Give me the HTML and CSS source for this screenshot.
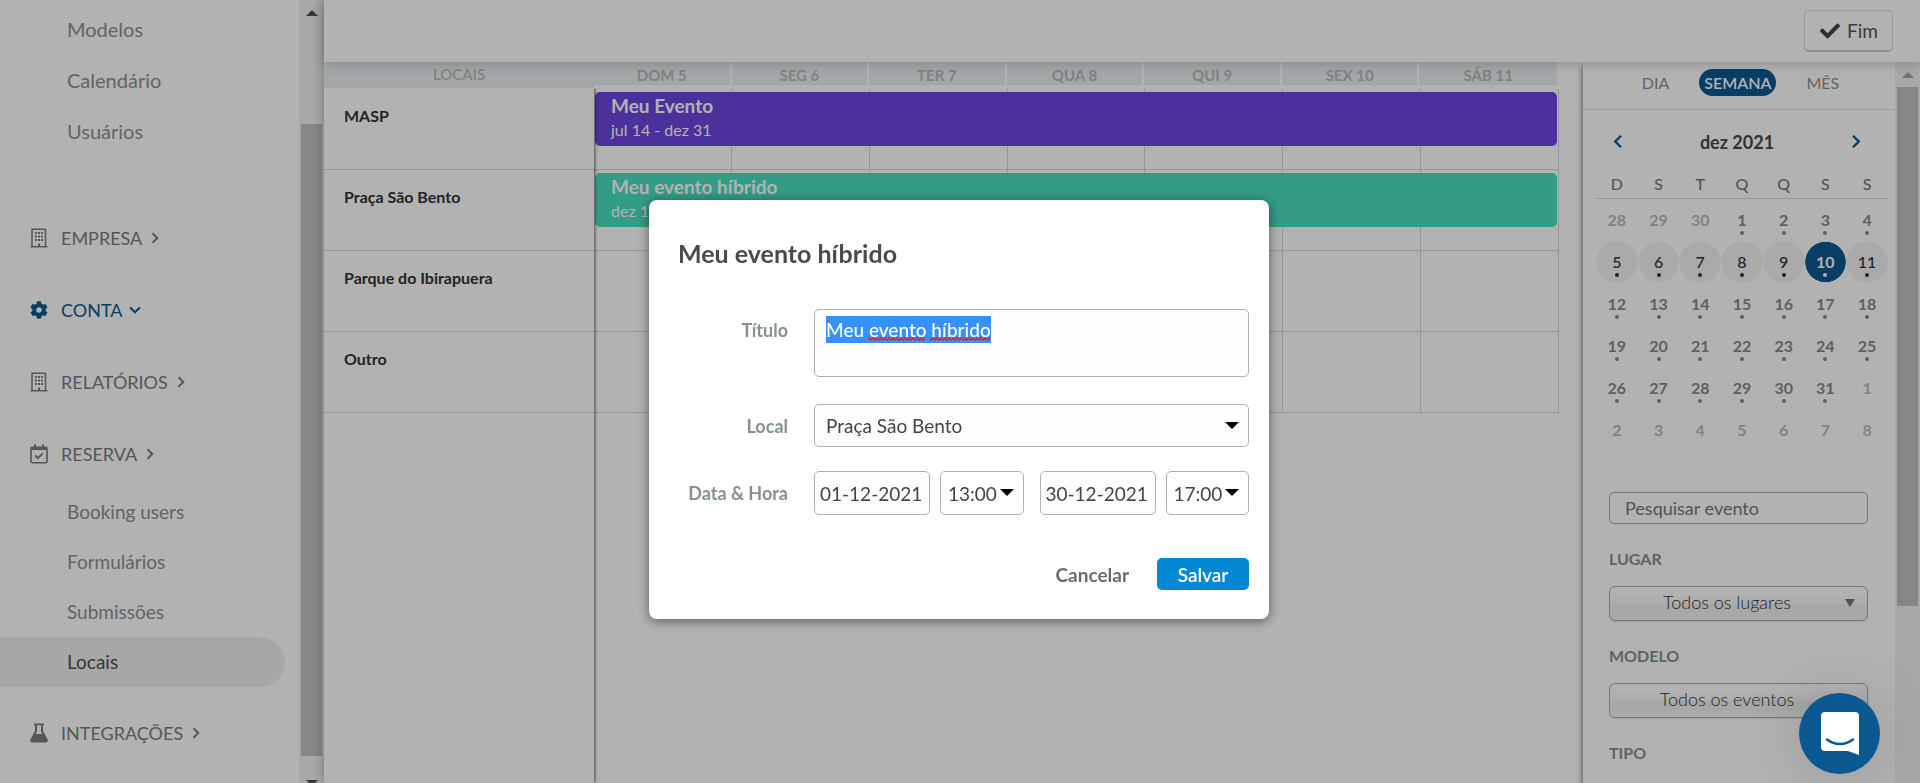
FILE: index.html
```html
<!DOCTYPE html>
<html lang="pt-BR">
<head>
  <meta charset="UTF-8">
  <meta name="viewport" content="width=device-width, initial-scale=1.0">
  <title>Locais</title>
  <link rel="stylesheet" href="styles.css">
</head>
<body>
  <svg width="0" height="0" class="sprite" aria-hidden="true">
    <symbol id="i-building" viewBox="0 0 18 20">
      <path d="M2 18.500V1.200h13.500v17.300" fill="none" stroke="currentColor" stroke-width="1.500"/>
      <path d="M.5 18h17v1.500H.5zM8 15.500h2V19H8zM5 4h2v2H5zM8 4h2v2H8zM11 4h2v2h-2zM5 7.500h2v2H5zM8 7.500h2v2H8zM11 7.500h2v2h-2zM5 11h2v2H5zM8 11h2v2H8zM11 11h2v2h-2z" fill="currentColor"/>
    </symbol>
    <symbol id="i-chevron" viewBox="0 0 10 12">
      <path d="M2.5 1.2 7.3 6l-4.8 4.8" fill="none" stroke="currentColor" stroke-width="2"/>
    </symbol>
  </svg>

  <div class="app">
    <aside class="sidebar">
      <nav class="menu">
        <ul class="submenu">
          <li><a href="#">Modelos</a></li>
          <li><a href="#">Calendário</a></li>
          <li><a href="#">Usuários</a></li>
        </ul>
        <a href="#" class="group">
          <svg class="icon"><use href="#i-building"/></svg>EMPRESA
          <svg class="chevron"><use href="#i-chevron"/></svg>
        </a>
        <a href="#" class="group open">
          <svg class="icon" viewBox="0 0 512 512"><path fill="currentColor" d="M487.4 315.7l-42.6-24.6c4.3-23.2 4.3-47 0-70.2l42.6-24.6c4.9-2.8 7.1-8.6 5.5-14-11.1-35.6-30-67.8-54.7-94.6-3.8-4.1-10-5.1-14.8-2.3L380.8 110c-17.9-15.4-38.5-27.3-60.8-35.1V25.8c0-5.6-3.9-10.5-9.4-11.7-36.7-8.2-74.3-7.8-109.2 0-5.5 1.2-9.4 6.1-9.4 11.7V75c-22.2 7.9-42.8 19.8-60.8 35.1L88.7 85.5c-4.9-2.8-11-1.9-14.8 2.3-24.7 26.7-43.6 58.9-54.7 94.6-1.7 5.4.6 11.2 5.5 14L67.3 221c-4.3 23.2-4.3 47 0 70.2l-42.6 24.6c-4.9 2.8-7.1 8.6-5.5 14 11.1 35.6 30 67.8 54.7 94.6 3.8 4.1 10 5.1 14.8 2.3l42.6-24.6c17.9 15.4 38.5 27.3 60.8 35.1v49.2c0 5.6 3.9 10.5 9.4 11.7 36.7 8.2 74.3 7.8 109.2 0 5.5-1.2 9.4-6.1 9.4-11.7v-49.2c22.2-7.9 42.8-19.8 60.8-35.1l42.6 24.6c4.9 2.8 11 1.9 14.8-2.3 24.7-26.7 43.6-58.9 54.7-94.6 1.5-5.5-.7-11.3-5.6-14.1zM256 336c-44.1 0-80-35.9-80-80s35.9-80 80-80 80 35.9 80 80-35.9 80-80 80z"/></svg>CONTA
          <svg class="chevron"><use href="#i-chevron"/></svg>
        </a>
        <a href="#" class="group">
          <svg class="icon"><use href="#i-building"/></svg>RELATÓRIOS
          <svg class="chevron"><use href="#i-chevron"/></svg>
        </a>
        <a href="#" class="group">
          <svg class="icon" viewBox="0 0 18 20"><rect x="1" y="3.2" width="16" height="15.6" rx="1.2" fill="none" stroke="currentColor" stroke-width="1.6"/><path d="M1 3h16v3H1zM4 .5h2V4H4zM12 .5h2V4h-2z" fill="currentColor"/><path d="m5.2 11.5 2.7 2.7 4.9-4.9" fill="none" stroke="currentColor" stroke-width="1.8"/></svg>RESERVA
          <svg class="chevron"><use href="#i-chevron"/></svg>
        </a>
        <ul class="submenu compact">
          <li><a href="#">Booking users</a></li>
          <li><a href="#">Formulários</a></li>
          <li><a href="#">Submissões</a></li>
          <li><a href="#" class="active">Locais</a></li>
        </ul>
        <a href="#" class="group">
          <svg class="icon" viewBox="0 0 18 20"><path fill="currentColor" fill-rule="evenodd" d="M4 .5h10v1.700h-1V8l4.500 8.200c.9 1.700.1 3.300-1.600 3.300H2.100C.4 19.500-.4 17.900.5 16.200L5 8V2.200H4zM7 2.200V8.500L5.600 11h6.800L11 8.500V2.200z"/></svg>INTEGRAÇÕES
          <svg class="chevron"><use href="#i-chevron"/></svg>
        </a>
      </nav>
      <div class="scrollbar sidebar-scroll">
        <span class="arrow-up"></span>
        <span class="thumb"></span>
        <span class="arrow-down"></span>
      </div>
    </aside>

    <main class="main">
      <header class="topbar">
        <button type="button" class="done">
          <svg viewBox="0 0 512 512" width="20" height="20"><path fill="currentColor" d="M173.900 439.400 7.500 273c-10-10-10-26.200 0-36.200l36.200-36.200c10-10 26.200-10 36.200 0L192 312.700 432.100 72.600c10-10 26.200-10 36.200 0l36.200 36.200c10 10 10 26.200 0 36.200L210.100 439.400c-10 10-26.200 10-36.200 0z"/></svg>Fim
        </button>
      </header>

      <div class="content">
        <section class="places">
          <div class="places-head">LOCAIS</div>
          <div class="places-list">
            <div class="place">MASP</div>
            <div class="place">Praça São Bento</div>
            <div class="place">Parque do Ibirapuera</div>
            <div class="place">Outro</div>
          </div>
        </section>

        <section class="week">
          <div class="week-head">
            <span>DOM 5</span><span>SEG 6</span><span>TER 7</span><span>QUA 8</span><span>QUI 9</span><span>SEX 10</span><span>SÁB 11</span>
          </div>
          <div class="week-row">
            <i></i><i></i><i></i><i></i><i></i><i></i><i></i>
            <div class="event purple"><strong>Meu Evento</strong><span>jul 14 - dez 31</span></div>
          </div>
          <div class="week-row">
            <i></i><i></i><i></i><i></i><i></i><i></i><i></i>
            <div class="event green"><strong>Meu evento híbrido</strong><span>dez 1 - dez 30</span></div>
          </div>
          <div class="week-row"><i></i><i></i><i></i><i></i><i></i><i></i><i></i></div>
          <div class="week-row"><i></i><i></i><i></i><i></i><i></i><i></i><i></i></div>
        </section>

        <aside class="panel">
          <div class="views">
            <button type="button">DIA</button>
            <button type="button" class="current">SEMANA</button>
            <button type="button">MÊS</button>
          </div>
          <div class="month">
            <button type="button" class="prev" aria-label="Mês anterior"><svg class="chevron"><use href="#i-chevron"/></svg></button>
            <h2>dez 2021</h2>
            <button type="button" aria-label="Próximo mês"><svg class="chevron"><use href="#i-chevron"/></svg></button>
          </div>
          <table class="calendar">
            <thead>
              <tr><th>D</th><th>S</th><th>T</th><th>Q</th><th>Q</th><th>S</th><th>S</th></tr>
            </thead>
            <tbody>
              <tr><td class="out">28</td><td class="out">29</td><td class="out">30</td><td>1</td><td>2</td><td>3</td><td>4</td></tr>
              <tr class="in-week"><td>5</td><td>6</td><td>7</td><td>8</td><td>9</td><td class="today">10</td><td>11</td></tr>
              <tr><td>12</td><td>13</td><td>14</td><td>15</td><td>16</td><td>17</td><td>18</td></tr>
              <tr><td>19</td><td>20</td><td>21</td><td>22</td><td>23</td><td>24</td><td>25</td></tr>
              <tr><td>26</td><td>27</td><td>28</td><td>29</td><td>30</td><td>31</td><td class="out">1</td></tr>
              <tr><td class="out">2</td><td class="out">3</td><td class="out">4</td><td class="out">5</td><td class="out">6</td><td class="out">7</td><td class="out">8</td></tr>
            </tbody>
          </table>
          <form class="filters">
            <input type="text" class="search" placeholder="Pesquisar evento" aria-label="Pesquisar evento">
            <label for="lugar">LUGAR</label>
            <div class="pick">
              <select id="lugar"><option>Todos os lugares</option></select>
            </div>
            <label for="modelo">MODELO</label>
            <div class="pick">
              <select id="modelo"><option>Todos os eventos</option></select>
            </div>
            <label for="tipo">TIPO</label>
            <div class="pick">
              <select id="tipo"><option>Todos os tipos</option></select>
            </div>
          </form>
        </aside>
        <div class="scrollbar panel-scroll">
          <span class="arrow-up"></span>
          <span class="thumb"></span>
        </div>
      </div>
    </main>
  </div>

  <div class="overlay">
    <form class="modal" role="dialog" aria-labelledby="modalTitle">
      <h1 id="modalTitle">Meu evento híbrido</h1>
      <div class="field field-title">
        <label for="titulo">Título</label>
        <div class="title-box">
          <textarea id="titulo" spellcheck="false">Meu evento híbrido</textarea>
          <!-- spelling marks under the last two words -->
          <svg class="spell" width="122" height="4" aria-hidden="true">
            <defs><pattern id="wave" width="4" height="4" patternUnits="userSpaceOnUse"><path d="M-1 3 1 1l2 2 2-2" fill="none" stroke="#e02020" stroke-width="1.400"/></pattern></defs>
            <rect width="57" height="4" fill="url(#wave)"/>
            <rect x="62" width="60" height="4" fill="url(#wave)"/>
          </svg>
        </div>
      </div>
      <div class="field">
        <label for="local">Local</label>
        <div class="select">
          <select id="local"><option>Praça São Bento</option></select>
        </div>
      </div>
      <div class="field field-dates">
        <label for="dataInicio">Data &amp; Hora</label>
        <div class="dates">
          <input type="text" id="dataInicio" value="01-12-2021">
          <div class="select time"><select aria-label="Hora de início"><option>13:00</option></select></div>
          <input type="text" class="end" value="30-12-2021" aria-label="Data de fim">
          <div class="select time"><select aria-label="Hora de fim"><option>17:00</option></select></div>
        </div>
      </div>
      <div class="actions">
        <button type="button" class="cancel">Cancelar</button>
        <button type="submit" class="save">Salvar</button>
      </div>
    </form>
  </div>

  <button type="button" class="chat" aria-label="Chat">
    <svg width="38" height="43" viewBox="0 0 38 43"><path fill="#fff" d="M4 0h30a4 4 0 0 1 4 4v39l-11-4H4a4 4 0 0 1-4-4V4a4 4 0 0 1 4-4z"/><path d="M6 27.500c8 6 18 6 26 0" fill="none" stroke="#0c5891" stroke-width="2.400" stroke-linecap="round"/></svg>
  </button>

  <script>
    const titulo = document.getElementById('titulo');
    titulo.focus();
    titulo.select();
  </script>
</body>
</html>
```
FILE: styles.css
```css
* {
  box-sizing: border-box;
}
body {
  margin: 0;
  height: 100vh;
  overflow: hidden;
  font-family: Lato, sans-serif;
  font-size: 18px;
  color: #333;
  background: #fff;
}
button, input, select, textarea {
  font-family: inherit;
  font-size: inherit;
  color: inherit;
  margin: 0;
}
button {
  background: none;
  border: none;
  padding: 0;
  cursor: pointer;
}
a {
  color: inherit;
  text-decoration: none;
}
.sprite {
  position: absolute;
}
.app {
  display: flex;
  height: 100vh;
}

/* scrollbars */
.scrollbar {
  display: flex;
  flex-direction: column;
  align-items: center;
  width: 25px;
  flex: none;
  background: #f1f1f1;
}
.thumb {
  width: 21px;
  background: #c1c1c1;
}
.arrow-up, .arrow-down {
  border: 6px solid transparent;
  border-top-width: 0;
  border-bottom: 6px solid #505050;
}
.arrow-down {
  border-top: 6px solid #505050;
  border-bottom-width: 0;
}
.sidebar-scroll .arrow-up {
  margin: 10px 0 108px;
}
.sidebar-scroll .thumb {
  flex: 1;
}
.sidebar-scroll .arrow-down {
  margin: 24px 0 -3px;
}
.panel-scroll .arrow-up {
  margin: 10px 0 9px;
  border-bottom-color: #a3a3a3;
}
.panel-scroll .thumb {
  height: 72%;
}

/* sidebar */
.sidebar {
  display: flex;
  width: 324px;
  flex: none;
}
.menu {
  flex: 1;
  padding-top: 4px;
}
.submenu {
  list-style: none;
  margin: 0 0 45px;
  padding: 0;
}
.submenu a {
  display: block;
  margin-right: 14px;
  padding-left: 67px;
  line-height: 51px;
  font-size: 20px;
  color: #8a9193;
}
.submenu.compact {
  margin: -3px 0 10px;
}
.submenu.compact a {
  line-height: 50px;
  font-size: 19px;
}
.submenu .active,
.submenu.compact .active {
  color: #4d4d4d;
  background: #f0f0f0;
  border-radius: 0 25px 25px 0;
}
.group {
  display: flex;
  align-items: center;
  height: 72px;
  padding-left: 30px;
  color: #7c7c7e;
}
.group.open {
  color: #0c5891;
}
.icon {
  width: 18px;
  height: 20px;
  margin-right: 13px;
}
.chevron {
  width: 10px;
  height: 12px;
  margin-left: 8px;
}
.group.open .chevron {
  transform: rotate(90deg);
}

/* main area */
.main {
  flex: 1;
  display: flex;
  flex-direction: column;
  min-width: 0;
  background: #fff;
  box-shadow: 0 0 12px rgba(0, 0, 0, 0.3);
}
.topbar {
  position: relative;
  z-index: 2;
  display: flex;
  justify-content: flex-end;
  align-items: center;
  height: 62px;
  flex: none;
  padding-right: 27px;
  background: #fff;
  box-shadow: 0 2px 12px rgba(0, 0, 0, 0.2);
}
.done {
  display: flex;
  align-items: center;
  gap: 7px;
  height: 42px;
  padding: 0 14px 0 15px;
  border: 1px solid #dcdcdc;
  border-bottom: 2px solid #d0d0d0;
  border-radius: 5px;
  font-size: 19px;
  color: #555;
}
.done svg {
  color: #444;
}
.content {
  flex: 1;
  display: flex;
  min-height: 0;
}
.places {
  display: flex;
  flex-direction: column;
  width: 270px;
  flex: none;
}
.places-head,
.week-head {
  background: #ebf0f2;
  color: #b4bdbf;
  font-size: 15px;
  font-weight: bold;
  text-align: center;
}
.places-head {
  height: 26px;
  line-height: 24px;
  font-weight: 600;
}
.places-list {
  flex: 1;
  position: relative;
  z-index: 1;
  padding-top: 1px;
  box-shadow: 1px 0 3px rgba(0, 0, 0, 0.6);
  clip-path: inset(0 -6px 0 0);
  background: #fff;
}
.place {
  height: 81px;
  padding: 17px 20px;
  border-bottom: 1px solid #d8d8d8;
  font-size: 16px;
  line-height: 20px;
  font-weight: bold;
}
.week {
  flex: 1;
  margin-right: 24px;
}
.week-head {
  display: grid;
  grid-template-columns: repeat(7, 1fr);
  height: 23px;
  line-height: 26px;
  margin: 0 2px 4px 0;
}
.week-head span {
  border-right: 2px solid #fff;
}
.week-head span:last-child {
  border-right: none;
}
.week-row {
  display: grid;
  grid-template-columns: repeat(7, 1fr);
  grid-template-rows: 80px;
  border-bottom: 1px solid #d8d8d8;
}
.week-row i {
  grid-row: 1;
  border-right: 1px solid #d8d8d8;
}
.week-row i:nth-child(1) { grid-column: 1; }
.week-row i:nth-child(2) { grid-column: 2; }
.week-row i:nth-child(3) { grid-column: 3; }
.week-row i:nth-child(4) { grid-column: 4; }
.week-row i:nth-child(5) { grid-column: 5; }
.week-row i:nth-child(6) { grid-column: 6; }
.week-row i:nth-child(7) { grid-column: 7; }
.event {
  grid-row: 1;
  grid-column: 1 / -1;
  display: flex;
  flex-direction: column;
  height: 54px;
  margin: 3px 2px 0 1px;
  padding: 2px 16px;
  border-radius: 5px;
  color: #fff;
  font-size: 16px;
  line-height: 24px;
}
.event strong {
  font-size: 19px;
}
.purple {
  background: #6a47df;
}
.green {
  background: #49e0be;
}

/* right panel */
.panel {
  width: 312px;
  flex: none;
  overflow: hidden;
  box-shadow: -1px 4px 5px rgba(0, 0, 0, 0.5);
}
.views {
  display: flex;
  justify-content: center;
  align-items: center;
  gap: 30px;
  height: 48px;
  padding: 0 0 7px 3px;
  border-bottom: 1px solid #e6e6e6;
  font-size: 16px;
  color: #8a9193;
}
.views .current {
  height: 27px;
  padding: 0 5px;
  border-radius: 14px;
  color: #fff;
  font-weight: 600;
  background: #0c5891;
}
.month {
  display: flex;
  justify-content: space-between;
  align-items: center;
  height: 64px;
  padding: 0 33px 0 29px;
}
.month h2 {
  margin: 0;
  font-size: 18px;
  color: #484848;
}
.month button {
  color: #0c5891;
}
.month .chevron {
  width: 12px;
  height: 15px;
  margin: 0;
}
.month .prev .chevron {
  transform: rotate(180deg);
}
.calendar {
  width: 292px;
  margin: 0 0 0 13px;
  border-spacing: 0;
  table-layout: fixed;
  text-align: center;
}
.calendar th {
  height: 25px;
  padding: 0 0 4px;
  border-bottom: 1px solid #d8d8d8;
  font-size: 16px;
  line-height: 20px;
  font-weight: 500;
  color: #777;
}
.calendar td {
  height: 42px;
  padding: 10px 0 0;
  vertical-align: top;
  font-size: 16px;
  line-height: 22px;
  font-weight: bold;
  color: #8a8a8a;
}
.calendar td::after {
  content: "";
  display: block;
  width: 4px;
  height: 4px;
  margin: 0 auto;
  border-radius: 50%;
  background: currentColor;
}
.calendar .out {
  color: #bbb;
}
.calendar .out::after {
  background: none;
}
.calendar .in-week td {
  color: #333;
  font-weight: 500;
  background: radial-gradient(circle closest-side, #f4f4f4 97%, transparent);
}
.calendar .in-week .today {
  color: #fff;
  font-weight: bold;
  background: radial-gradient(circle closest-side, #0c5891 97%, transparent);
}
.filters {
  padding: 41px 27px 0 26px;
}
.search {
  display: block;
  width: 100%;
  height: 32px;
  padding: 0 15px;
  border: 1px solid #a3afb3;
  border-radius: 5px;
  background: #fff;
  color: #666;
}
.search::placeholder {
  color: #777;
}
.filters label {
  display: block;
  padding: 24px 0 16px;
  font-size: 16px;
  line-height: 22px;
  font-weight: bold;
  color: #849093;
}
.pick {
  position: relative;
}
.pick:last-child {
  margin-top: 8px;
}
.pick select {
  appearance: none;
  display: block;
  width: 100%;
  height: 35px;
  padding: 0 23px 4px 0;
  border: 1px solid #a3afb3;
  border-radius: 6px;
  background: linear-gradient(#fff 20%, #f6f6f6 50%, #eee 52%, #f4f4f4 100%);
  font-weight: 300;
  text-align: center;
  text-align-last: center;
  box-shadow: 0 1px 1px rgba(0, 0, 0, 0.1);
}
.pick::after {
  content: "";
  position: absolute;
  right: 13px;
  top: 13px;
  border: 5px solid transparent;
  border-top: 8px solid #777;
  border-bottom: none;
}

/* modal */
.overlay {
  position: fixed;
  inset: 0;
  z-index: 10;
  display: flex;
  justify-content: center;
  align-items: flex-start;
  padding: 200px 2px 0 0;
  background: rgba(0, 0, 0, 0.3);
}
.modal {
  width: 620px;
  padding: 38px 20px 29px 29px;
  border-radius: 8px;
  background: #fff;
  box-shadow: 0 2px 12px rgba(0, 0, 0, 0.5);
}
.modal h1 {
  margin: 0 0 41px;
  font-size: 25px;
  line-height: 30px;
  color: #4a4a4a;
}
.field {
  display: flex;
  align-items: center;
  margin-bottom: 24px;
}
.field > label {
  width: 110px;
  margin-right: 26px;
  flex: none;
  text-align: right;
  font-weight: bold;
  color: #849093;
}
.field-title {
  align-items: flex-start;
  margin-bottom: 27px;
}
.field-title > label {
  line-height: 42px;
}
.title-box {
  flex: 1;
  position: relative;
}
.title-box textarea {
  display: block;
  width: 100%;
  height: 68px;
  padding: 6px 11px;
  line-height: 27px;
  font-weight: 500;
}
.title-box textarea::selection {
  color: #fff;
  background: rgba(51, 144, 255, 0.99);
}
.spell {
  position: absolute;
  left: 54px;
  top: 28px;
  pointer-events: none;
}
.modal textarea, .modal input, .modal select {
  border: 1px solid #a9b4b9;
  border-radius: 5px;
  outline: none;
  resize: none;
  background: #fdfdfd;
  font-size: 19px;
  color: #444;
}
.select {
  flex: 1;
  position: relative;
}
.select select {
  appearance: none;
  display: block;
  width: 100%;
  height: 43px;
  padding: 0 11px;
}
.select::after {
  content: "";
  position: absolute;
  right: 10px;
  top: 18px;
  border: 7px solid transparent;
  border-top-color: #000;
  border-bottom: none;
  pointer-events: none;
}
.dates {
  flex: 1;
  display: flex;
}
.dates input {
  width: 116px;
  height: 44px;
  margin-right: 10px;
  padding: 0 5px;
}
.dates .end {
  margin-left: 16px;
}
.time select {
  height: 44px;
  padding: 0 7px;
  background: #fff;
}
.field-dates {
  margin-bottom: 43px;
}
.actions {
  display: flex;
  justify-content: flex-end;
  align-items: center;
  gap: 28px;
}
.cancel {
  color: #6b6b6b;
  font-size: 19px;
  font-weight: bold;
}
.save {
  height: 32px;
  width: 92px;
  border-radius: 5px;
  background: #0288d5;
  color: #fff;
  font-size: 19px;
  font-weight: 600;
}

/* chat launcher */
.chat {
  position: fixed;
  right: 40px;
  bottom: 9px;
  z-index: 20;
  width: 81px;
  height: 81px;
  padding-top: 3px;
  border-radius: 50%;
  background: #0c5891;
  box-shadow: 0 2px 60px rgba(0, 0, 0, 0.15);
}
```
